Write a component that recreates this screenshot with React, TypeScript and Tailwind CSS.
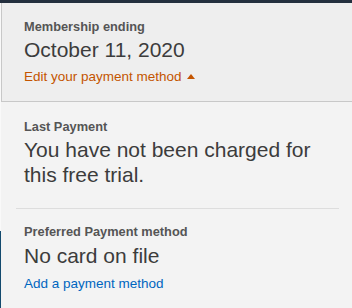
import React from "react";

export default function App() {
  return (
    <div
      className="w-[352px] h-[308px] flex flex-col overflow-hidden bg-[#f3f3f3]"
      style={{ fontFamily: '"Liberation Sans", Arial, sans-serif' }}
    >
      <div className="h-[3px] w-full bg-[#232f3e] shrink-0" />
      <div className="flex flex-1">
        {/* page edge behind the popover */}
        <div className="w-[1px] flex flex-col shrink-0">
          <div className="h-[228px] bg-[#f9f9f9]" />
          <div className="flex-1 bg-[#134a6e]" />
        </div>
        <div className="flex-1 flex flex-col">
          {/* top panel */}
          <div className="bg-[#eeeeee] border-l border-b border-[#c8c8c8] pl-[22px] pt-[16px] pb-[15px]">
            <div className="text-[12.8px] leading-[16px] font-bold text-[#555555]">
              Membership ending
            </div>
            <div className="mt-[2px] text-[21px] leading-[25px] text-[#3c3c3c]">
              October 11, 2020
            </div>
            <div className="mt-[6px] flex items-center text-[13.5px] leading-[18px] text-[#c45500]">
              <span>Edit your payment method</span>
              <svg
                className="ml-[5px] mt-[-1px]"
                width="8"
                height="5"
                viewBox="0 0 8 5"
              >
                <polygon points="0,5 4,0 8,5" fill="#c45500" />
              </svg>
            </div>
          </div>
          {/* lower panel */}
          <div className="flex-1 bg-[#f3f3f3] pt-[17px]">
            <div className="pl-[23px] pr-[24px]">
              <div className="text-[12.8px] leading-[16px] font-bold text-[#555555]">
                Last Payment
              </div>
              <div className="mt-[2px] text-[21px] leading-[25px] text-[#3c3c3c]">
                You have not been charged for this free trial.
              </div>
            </div>
            <div className="mt-[21px] ml-[15px] mr-[13px] h-px bg-[#dddddd]" />
            <div className="pl-[23px] pr-[24px] pt-[15px]">
              <div className="text-[12.8px] leading-[16px] font-bold text-[#555555]">
                Preferred Payment method
              </div>
              <div className="mt-[3px] text-[21px] leading-[25px] text-[#3c3c3c]">
                No card on file
              </div>
              <div className="mt-[7px] text-[13.5px] leading-[18px] text-[#0066c0]">
                Add a payment method
              </div>
            </div>
          </div>
        </div>
      </div>
    </div>
  );
}
